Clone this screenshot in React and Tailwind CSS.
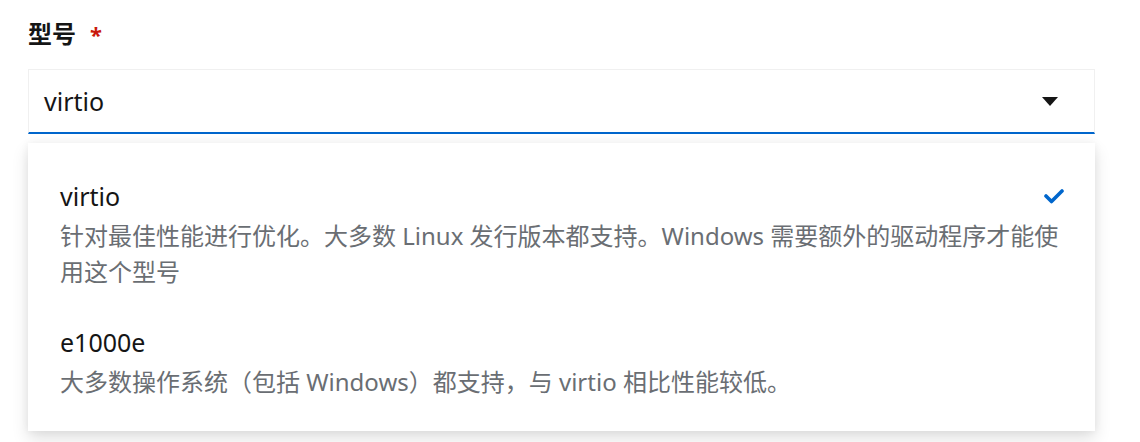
import React from "react";

const options = [
  {
    value: "virtio",
    description:
      "针对最佳性能进行优化。大多数 Linux 发行版本都支持。Windows 需要额外的驱动程序才能使用这个型号",
    selected: true,
  },
  {
    value: "e1000e",
    description: "大多数操作系统（包括 Windows）都支持，与 virtio 相比性能较低。",
    selected: false,
  },
];

function Caret() {
  return (
    <svg width="16" height="9" viewBox="0 0 16 9" className="block">
      <path d="M0 0 H16 L8 9 Z" fill="#151515" />
    </svg>
  );
}

function Check() {
  return (
    <svg width="20" height="15" viewBox="0 0 20 15" className="block">
      <path
        d="M2 7 L7.5 12.5 L18 2"
        fill="none"
        stroke="#0066cc"
        strokeWidth="3.6"
        strokeLinecap="round"
        strokeLinejoin="round"
      />
    </svg>
  );
}

export default function App() {
  return (
    <div
      className="w-[1140px] h-[442px] bg-white overflow-hidden pl-[28px] pr-[45px] pt-[16px] text-[#151515]"
      style={{ fontFamily: '"Noto Sans", "Noto Sans CJK SC", sans-serif' }}
    >
      {/* Label */}
      <div className="flex items-center h-[36px] text-[24px] leading-[36px] font-bold">
        <span>型号</span>
        <span className="ml-[14px] text-[#c9190b] text-[22px]">*</span>
      </div>

      {/* Select toggle */}
      <div className="mt-[17px] h-[65px] flex items-center justify-between border border-[#f0f0f0] border-b-2 border-b-[#0066cc] pl-[15px] pr-[36px]">
        <span className="text-[25px] leading-[36px]">virtio</span>
        <Caret />
      </div>

      {/* Menu */}
      <div className="mt-[9px] bg-white pt-[18px] pb-[14px] shadow-[0_8px_16px_0_rgba(3,3,3,0.12),0_0_8px_0_rgba(3,3,3,0.06)]">
        {options.map((o) => (
          <div key={o.value} className="py-[17px] pl-[32px] pr-[31px]">
            <div className="flex items-center justify-between">
              <span className="text-[25px] leading-[36px]">{o.value}</span>
              {o.selected && <Check />}
            </div>
            <div className="mt-[4px] text-[24px] leading-[36px] text-[#6a6e73]">
              {o.description}
            </div>
          </div>
        ))}
      </div>
    </div>
  );
}
